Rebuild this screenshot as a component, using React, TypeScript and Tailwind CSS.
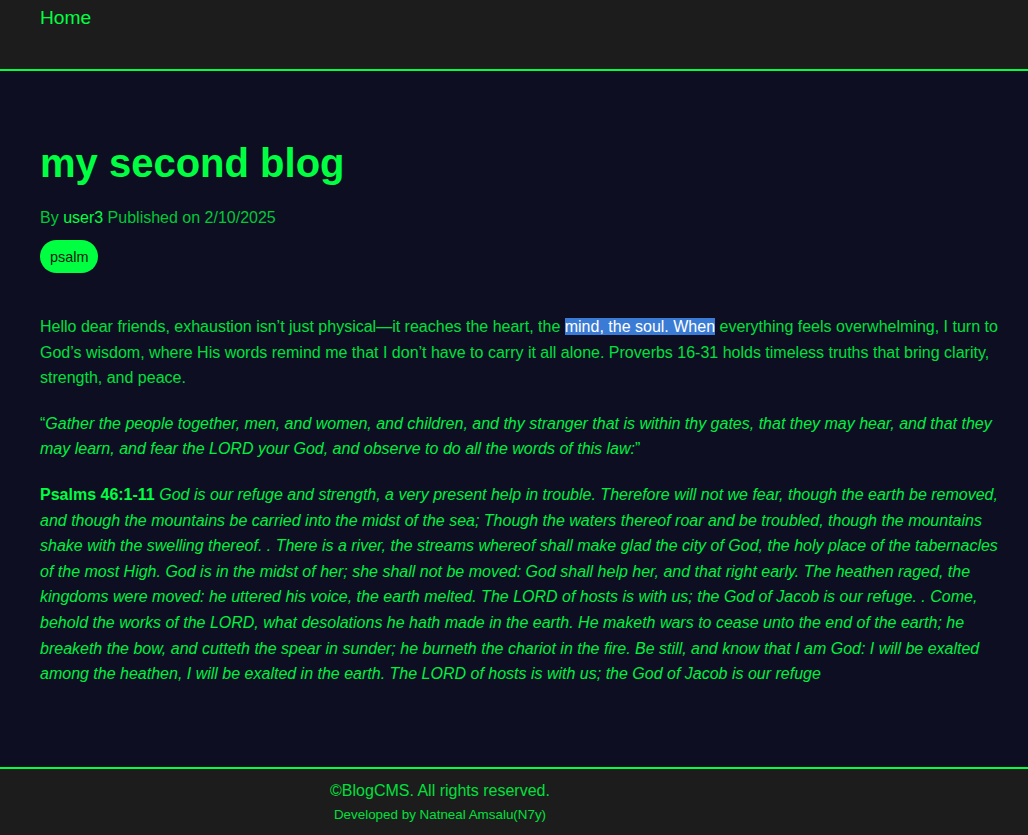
import React from "react";

const psalm =
  "God is our refuge and strength, a very present help in trouble. Therefore will not we fear, though the earth be removed, and though the mountains be carried into the midst of the sea; Though the waters thereof roar and be troubled, though the mountains shake with the swelling thereof. . There is a river, the streams whereof shall make glad the city of God, the holy place of the tabernacles of the most High. God is in the midst of her; she shall not be moved: God shall help her, and that right early. The heathen raged, the kingdoms were moved: he uttered his voice, the earth melted. The LORD of hosts is with us; the God of Jacob is our refuge. . Come, behold the works of the LORD, what desolations he hath made in the earth. He maketh wars to cease unto the end of the earth; he breaketh the bow, and cutteth the spear in sunder; he burneth the chariot in the fire. Be still, and know that I am God: I will be exalted among the heathen, I will be exalted in the earth. The LORD of hosts is with us; the God of Jacob is our refuge";

const App = () => {
  return (
    <div className="min-h-screen flex flex-col bg-[#0e0e23] font-['Liberation_Sans',Arial,sans-serif]">
      <header className="bg-[#1c1c1c] border-b-2 border-[#00ff41] h-[71px] px-10 pt-[6px]">
        <a href="#" className="text-[19.2px] leading-6 text-[#00ff41]">
          Home
        </a>
      </header>

      <main className="flex-1 pl-10 pr-6 pt-[67px] pb-[77px]">
        <h1 className="text-[40px] leading-[50px] font-bold text-[#00ff41]">
          my second blog
        </h1>
        <p className="mt-[18px] text-base leading-6 text-[#00c936]">
          By <span className="text-[#00ff41]">user3</span> Published on 2/10/2025
        </p>
        <div className="mt-[10px] flex">
          <span className="bg-[#00ff41] text-[#0e1a10] text-[14.4px] leading-[34px] h-[33px] px-[10px] rounded-full">
            psalm
          </span>
        </div>

        <div className="mt-[41px] text-base leading-[25.6px]">
          <p className="text-[#00e03c] mb-5">
            Hello dear friends, exhaustion isn’t just physical—it reaches the heart, the{" "}
            <span className="bg-[#3a7bd5] text-white">mind, the soul. When</span> everything
            feels overwhelming, I turn to God’s wisdom, where His words remind me that I don’t
            have to carry it all alone. Proverbs 16-31 holds timeless truths that bring clarity,
            strength, and peace.
          </p>
          <p className="text-[#00f040] mb-5">
            “
            <em>
              Gather the people together, men, and women, and children, and thy stranger that is
              within thy gates, that they may hear, and that they may learn, and fear the LORD
              your God, and observe to do all the words of this law:
            </em>
            ”
          </p>
          <p className="text-[#00f040]">
            <strong className="text-[#00ff41]">Psalms 46:1-11</strong> <em>{psalm}</em>
          </p>
        </div>
      </main>

      <footer className="bg-[#1c1c1c] border-t-2 border-[#00ff41] pt-[10px] pb-[10px]">
        <div className="w-[880px] text-center">
          <p className="text-base leading-6 text-[#00e03c]">©BlogCMS. All rights reserved.</p>
          <p className="mt-[2px] text-[13.4px] leading-[20px] text-[#00e03c]">
            Developed by Natneal Amsalu(N7y)
          </p>
        </div>
      </footer>
    </div>
  );
};

export default App;
